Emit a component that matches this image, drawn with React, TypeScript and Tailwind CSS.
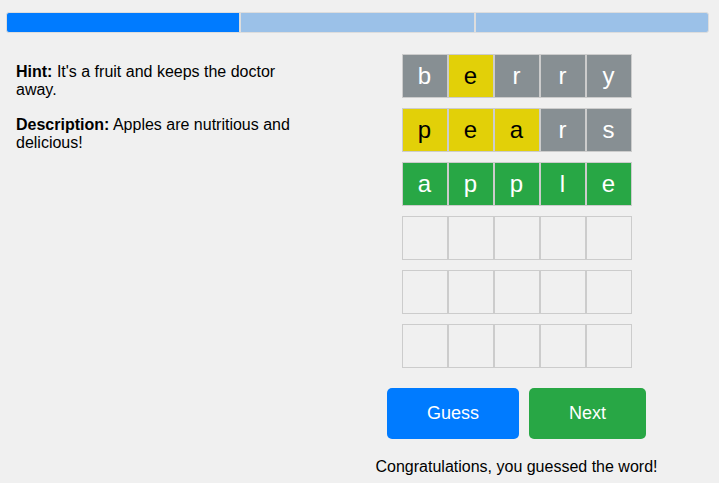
import React from "react";

type Cell = { l: string; c: "g" | "y" | "x" | "e" };

const rows: Cell[][] = [
  [
    { l: "b", c: "x" },
    { l: "e", c: "y" },
    { l: "r", c: "x" },
    { l: "r", c: "x" },
    { l: "y", c: "x" },
  ],
  [
    { l: "p", c: "y" },
    { l: "e", c: "y" },
    { l: "a", c: "y" },
    { l: "r", c: "x" },
    { l: "s", c: "x" },
  ],
  [
    { l: "a", c: "g" },
    { l: "p", c: "g" },
    { l: "p", c: "g" },
    { l: "l", c: "g" },
    { l: "e", c: "g" },
  ],
];

const empty: Cell[] = Array.from({ length: 5 }, () => ({ l: "", c: "e" as const }));
const allRows = [...rows, empty, empty, empty];

function Tile({ cell }: { cell: Cell }) {
  const cls =
    cell.c === "g"
      ? "bg-[#28a745] text-white"
      : cell.c === "y"
      ? "bg-[#e2d008] text-black"
      : cell.c === "x"
      ? "bg-[#878f93] text-white"
      : "bg-transparent";
  return (
    <div
      className={`w-[46px] h-[44px] border border-[#cccccc] flex items-center justify-center text-[24px] leading-none ${cls}`}
    >
      {cell.l}
    </div>
  );
}

export default function App() {
  return (
    <div
      className="min-h-[483px] w-full bg-[#f0f0f0] text-black"
      style={{ fontFamily: '"Liberation Sans", Arial, sans-serif' }}
    >
      <div className="pt-[12px] pl-[6px] pr-[10px]">
        <div className="flex h-[21px]">
          <div className="flex-1 bg-[#007bff] border border-[#dddddd] rounded-l-[3px]" />
          <div className="flex-1 bg-[#9bc1e8] border border-[#dddddd]" />
          <div className="flex-1 bg-[#9bc1e8] border border-[#dddddd] rounded-r-[3px]" />
        </div>
      </div>
      <div className="flex mt-[21px]">
        <div className="w-[314px] px-4 pt-[9px] text-[16px] leading-[18px]">
          <p>
            <b>Hint:</b> It's a fruit and keeps the doctor away.
          </p>
          <p className="mt-[17px]">
            <b>Description:</b> Apples are nutritious and delicious!
          </p>
        </div>
        <div className="flex-1 flex flex-col items-center">
          <div className="flex flex-col gap-[10px]">
            {allRows.map((r, i) => (
              <div key={i} className="flex">
                {r.map((c, j) => (
                  <Tile key={j} cell={c} />
                ))}
              </div>
            ))}
          </div>
          <div className="flex gap-[10px] mt-[20px]">
            <button className="h-[51px] w-[132px] bg-[#007bff] text-white text-[18px] rounded-[5px]">
              Guess
            </button>
            <button className="h-[51px] w-[117px] bg-[#28a745] text-white text-[18px] rounded-[5px]">
              Next
            </button>
          </div>
          <p className="mt-[19px] text-[16px] leading-[18px]">
            Congratulations, you guessed the word!
          </p>
        </div>
      </div>
    </div>
  );
}
